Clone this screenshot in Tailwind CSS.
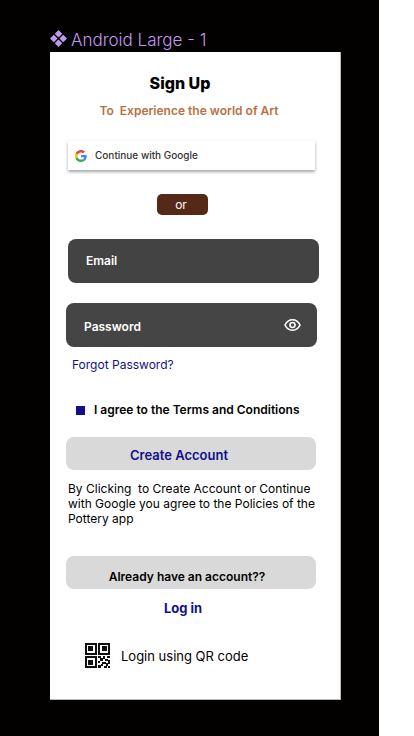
<!DOCTYPE html>
<html lang="en">
<head>
<meta charset="utf-8">
<meta name="viewport" content="width=device-width, initial-scale=1">
<title>Sign Up</title>
<script src="https://cdn.jsdelivr.net/npm/@tailwindcss/browser@4"></script>
</head>
<body class="bg-white font-['Inter',sans-serif] text-black">
<div class="mr-[35px] min-h-screen bg-[#030000] pt-7 pr-[38px] pb-9 pl-[50px]">
  <div class="flex h-6 items-center gap-1 text-[#c09af0]">
    <svg class="mb-1 size-[17px] shrink-0" viewBox="0 0 18 18" fill="currentColor" aria-hidden="true">
      <path d="M9 0l4 4-4 4-4-4zM9 10l4 4-4 4-4-4zM4 5l4 4-4 4-4-4zM14 5l4 4-4 4-4-4z"/>
    </svg>
    <p class="text-[17px] leading-6 font-light whitespace-nowrap">Android Large - 1</p>
  </div>

  <main class="flex flex-col border-r border-b border-[#b8b8b8] bg-white px-4 pt-[19px] pb-[30px]">
    <h1 class="mr-[30px] text-center text-base leading-6 font-extrabold">Sign Up</h1>
    <p class="mt-2 pr-3 text-center text-xs leading-4 font-semibold whitespace-pre text-[#b87142]">To  Experience the world of Art</p>

    <button type="button" class="mt-[21px] mr-[9px] ml-0.5 flex h-[30px] items-center gap-2 border-t border-[#fafafa] bg-white pl-[7px] text-[10px] font-medium text-[#333] shadow-[0_2px_3px_rgba(0,0,0,0.35)]">
      <svg class="size-3" viewBox="0 0 48 48" aria-hidden="true">
        <path fill="#EA4335" d="M24 9.5c3.54 0 6.71 1.22 9.21 3.6l6.85-6.85C35.9 2.38 30.47 0 24 0 14.62 0 6.51 5.38 2.56 13.22l7.98 6.19C12.43 13.72 17.74 9.5 24 9.5z"/>
        <path fill="#4285F4" d="M46.98 24.55c0-1.57-.15-3.09-.38-4.55H24v9.02h12.94c-.58 2.96-2.26 5.48-4.78 7.18l7.73 6c4.51-4.18 7.09-10.36 7.09-17.65z"/>
        <path fill="#FBBC05" d="M10.53 28.59A14.5 14.5 0 0 1 9.77 24c0-1.6.27-3.14.76-4.59l-7.98-6.19A23.9 23.9 0 0 0 0 24c0 3.88.92 7.54 2.56 10.78l7.97-6.19z"/>
        <path fill="#34A853" d="M24 48c6.48 0 11.93-2.13 15.89-5.81l-7.73-6c-2.15 1.45-4.92 2.3-8.16 2.3-6.26 0-11.57-4.22-13.47-9.91l-7.98 6.19C6.51 42.62 14.62 48 24 48z"/>
      </svg>
      Continue with Google
    </button>

    <div class="mt-6 mr-[26px] flex h-[21px] w-[51px] items-center justify-center self-center rounded-[5px] bg-[#552818] pr-0.5 text-xs text-white">or</div>

    <form class="mt-6 flex flex-col">
      <div class="mr-[5px] ml-0.5 flex h-11 items-center gap-2 rounded-lg bg-[#434343] px-[18px] text-white">
        <label for="email" class="text-xs font-semibold">Email</label>
        <input id="email" type="email" class="h-11 min-w-0 flex-1 bg-transparent text-xs outline-none">
      </div>

      <div class="mt-5 mr-[7px] flex h-11 items-center gap-2 rounded-lg bg-[#454545] pr-4 pl-[18px] text-white">
        <label for="password" class="pt-1 text-xs font-semibold">Password</label>
        <input id="password" type="password" class="h-11 min-w-0 flex-1 bg-transparent text-xs outline-none">
        <button type="button" aria-label="Show password">
          <svg class="h-4 w-[17px]" viewBox="0 0 17 16" fill="none" stroke="currentColor" stroke-width="1.6" aria-hidden="true">
            <path d="M1 8C2.600 4.600 5.300 2.800 8.500 2.800S14.400 4.600 16 8c-1.600 3.400-4.300 5.200-7.500 5.200S2.600 11.400 1 8z"/>
            <circle cx="8.500" cy="8" r="2.500"/>
          </svg>
        </button>
      </div>

      <a href="#forgot" class="mt-[10px] ml-1.5 self-start text-xs leading-4 text-[#130f8b]">Forgot Password?</a>

      <div class="mt-[27px] ml-2.5 flex items-center gap-[9px] whitespace-nowrap">
        <input id="terms" type="checkbox" checked class="size-[9px] shrink-0 appearance-none border border-[#130f8b] bg-white checked:bg-[#130f8b]">
        <label for="terms" class="text-xs leading-5 font-semibold">I agree to the Terms and Conditions</label>
      </div>

      <button type="submit" class="mt-[17px] mr-2 h-[33px] rounded-lg bg-[#d9d9d9] pt-1 pr-6 text-[13px] font-semibold text-[#130f8b]">Create Account</button>
    </form>

    <p class="mt-[11px] ml-0.5 text-xs leading-[15px] whitespace-pre">By Clicking  to Create Account or Continue
with Google you agree to the Policies of the
Pottery app</p>

    <button type="button" class="mt-[30px] mr-2 h-[33px] rounded-lg bg-[#d9d9d9] pt-2 pr-2 text-xs font-semibold">Already have an account??</button>
    <a href="#login" class="mt-[9px] mr-6 self-center text-[13px] leading-5 font-bold text-[#130f8b]">Log in</a>

    <a href="#qr" class="mt-6 ml-[18px] flex items-center gap-2.5 self-start text-[13px] leading-5">
      <svg class="size-[27px]" viewBox="0 0 27 27" fill="#111" aria-hidden="true">
        <path fill-rule="evenodd" d="M1 1h12v12H1zM3 3v8h8V3zM14 1h12v12H14zM16 3v8h8V3zM1 14h12v12H1zM3 16v8h8v-8z"/>
        <path d="M4 4h5v5H4zM18 4h5v5h-5zM4 18h5v5H4zM14 14h3v2h-3zM19 14h2v3h-2zM23 14h3v2h-3zM16 16h3v3h-3zM14 19h2v2h-2zM21 17h3v2h-3zM24 18h2v4h-2zM18 20h4v2h-4zM14 23h3v3h-3zM17 22h2v2h-2zM20 24h3v2h-3zM22 21h2v3h-2zM24 24h2v2h-2z"/>
      </svg>
      Login using QR code
    </a>
  </main>
</div>
</body>
</html>
